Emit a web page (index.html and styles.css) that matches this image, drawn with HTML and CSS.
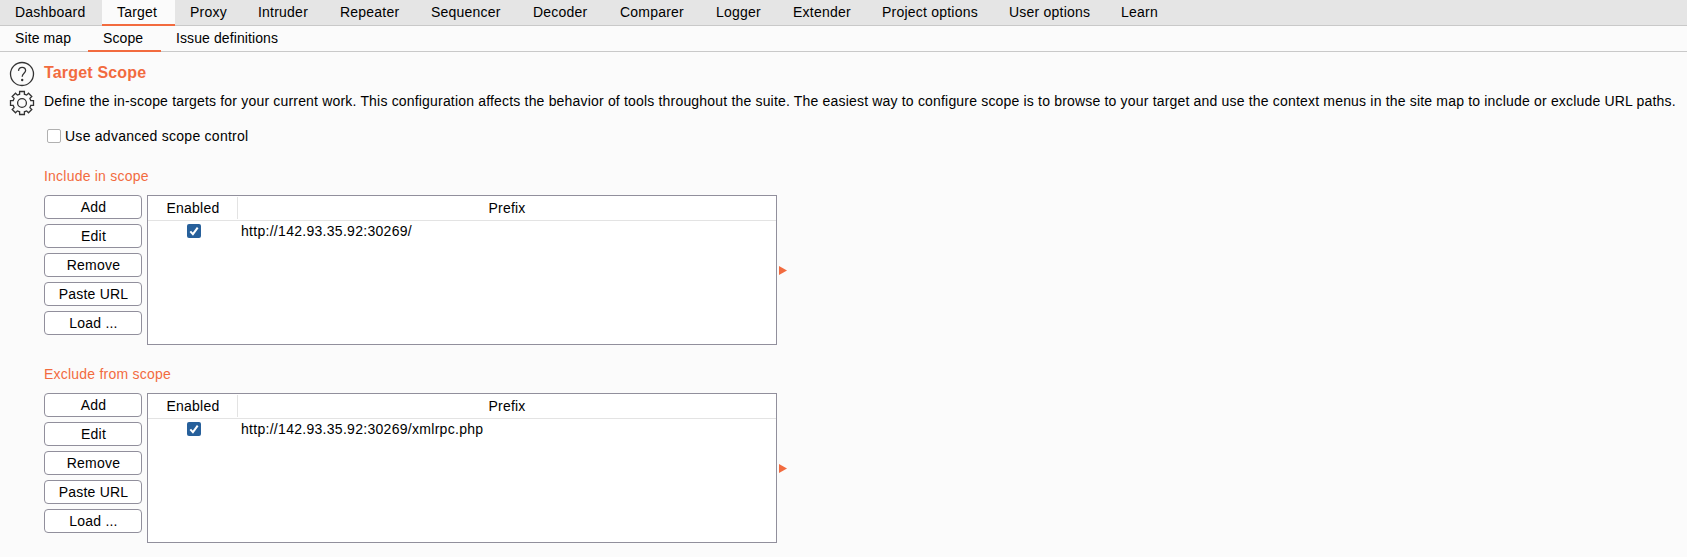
FILE: index.html
```html
<!DOCTYPE html>
<html lang="en">
<head>
<meta charset="utf-8">
<title>Target Scope</title>
<link rel="stylesheet" href="styles.css">
</head>
<body>
<nav class="tabs main-tabs">
  <span class="tab">Dashboard</span><span class="tab active">Target</span><span class="tab">Proxy</span><span class="tab">Intruder</span><span class="tab">Repeater</span><span class="tab">Sequencer</span><span class="tab">Decoder</span><span class="tab">Comparer</span><span class="tab">Logger</span><span class="tab">Extender</span><span class="tab">Project options</span><span class="tab">User options</span><span class="tab">Learn</span>
</nav>
<nav class="tabs sub-tabs">
  <span class="tab">Site map</span><span class="tab active">Scope</span><span class="tab">Issue definitions</span>
</nav>
<main class="page">
  <aside class="tools">
    <svg class="icon" viewBox="0 0 26 26"><circle cx="13" cy="13" r="11.5"/><path d="M9.5 9.8C9.8 7.3 11.2 6.4 13.1 6.4C15.2 6.4 16.6 7.7 16.6 9.6C16.6 12.3 13.2 12.4 13.2 15.7"/><circle class="dot" cx="13.2" cy="19" r="1.2"/></svg>
    <svg class="icon" viewBox="0 0 26 26"><path d="M10.6 4.2V1.5H15.4V4.2L17.6 5.1L19.5 3.2L22.8 6.5L20.9 8.4L21.8 10.6H24.5V15.4H21.8L20.9 17.6L22.8 19.5L19.5 22.8L17.6 20.9L15.4 21.8V24.5H10.6V21.8L8.4 20.9L6.5 22.8L3.2 19.5L5.1 17.6L4.2 15.4H1.5V10.6H4.2L5.1 8.4L3.2 6.5L6.5 3.2L8.4 5.1Z"/><circle cx="13" cy="13" r="4.4"/></svg>
  </aside>
  <div class="content">
    <h1 class="title">Target Scope</h1>
    <p class="description">Define the in-scope targets for your current work. This configuration affects the behavior of tools throughout the suite. The easiest way to configure scope is to browse to your target and use the context menus in the site map to include or exclude URL paths.</p>
    <label class="advanced"><span class="check"></span>Use advanced scope control</label>
    <section class="scope">
      <h2 class="heading">Include in scope</h2>
      <div class="editor">
        <div class="buttons"><button class="button">Add</button><button class="button">Edit</button><button class="button">Remove</button><button class="button">Paste URL</button><button class="button">Load ...</button></div>
        <div class="table">
          <div class="head"><span class="cell enabled">Enabled</span><span class="cell prefix">Prefix</span></div>
          <div class="row"><span class="mark"><svg class="checked" viewBox="0 0 14 14"><path d="M3.3 7.4L5.9 10.2L10.7 3.6"/></svg></span><span class="url">http://142.93.35.92:30269/</span></div>
        </div>
        <svg class="arrow" viewBox="0 0 8 9"><path d="M0 0L8 4.5L0 9Z"/></svg>
      </div>
    </section>
    <section class="scope">
      <h2 class="heading">Exclude from scope</h2>
      <div class="editor">
        <div class="buttons"><button class="button">Add</button><button class="button">Edit</button><button class="button">Remove</button><button class="button">Paste URL</button><button class="button">Load ...</button></div>
        <div class="table">
          <div class="head"><span class="cell enabled">Enabled</span><span class="cell prefix">Prefix</span></div>
          <div class="row"><span class="mark"><svg class="checked" viewBox="0 0 14 14"><path d="M3.3 7.4L5.9 10.2L10.7 3.6"/></svg></span><span class="url">http://142.93.35.92:30269/xmlrpc.php</span></div>
        </div>
        <svg class="arrow" viewBox="0 0 8 9"><path d="M0 0L8 4.5L0 9Z"/></svg>
      </div>
    </section>
  </div>
</main>
</body>
</html>
```
FILE: styles.css
```css
* { box-sizing: border-box; }
body {
  margin: 0;
  background: #fbfbfb;
  color: #000;
  font: 14px/16px "Liberation Sans", Arial, sans-serif;
  letter-spacing: 0.22px;
  overflow: hidden;
}
.tabs { display: grid; height: 26px; border-bottom: 1px solid #c9c9c9; }
.main-tabs {
  grid-template-columns: 102px 73px 68px 82px 91px 102px 87px 96px 77px 89px 127px 112px 70px;
  background: #e5e5e5;
}
.sub-tabs { grid-template-columns: 88px 73px 140px; letter-spacing: 0.1px; }
.tab { height: 26px; padding: 4px 0 0 15px; white-space: nowrap; }
.tab.active { background: #fbfbfb; border-bottom: 2px solid #f26b3f; }
.page { display: flex; padding: 9px 0 0 9px; }
.tools { display: flex; flex-direction: column; gap: 3px; width: 35px; }
.icon { width: 26px; height: 26px; fill: none; stroke: #333; stroke-width: 1.3; }
.icon .dot { fill: #333; stroke: none; }
.title { margin: 3px 0 0; font-size: 16px; line-height: 18px; font-weight: bold; letter-spacing: 0.18px; color: #f26b3f; }
.description { margin: 11px 0 0; white-space: nowrap; letter-spacing: 0.182px; }
.advanced { display: flex; align-items: center; gap: 4px; margin: 19px 0 0 3px; height: 16px; letter-spacing: 0.26px; }
.check { width: 14px; height: 14px; border: 1px solid #b0b0b0; border-radius: 2px; background: #fff; }
.scope { margin-top: 24px; }
.scope + .scope { margin-top: 21px; }
.heading { margin: 0 0 11px; font-size: 14px; line-height: 16px; font-weight: normal; color: #f26b3f; }
.editor { display: flex; }
.buttons { display: flex; flex-direction: column; gap: 5px; width: 98px; margin-right: 5px; }
.button {
  height: 24px;
  padding: 0 0 0 1px;
  border: 1px solid #918f9c;
  border-radius: 4px;
  background: #fff;
  color: #000;
  font: inherit;
  letter-spacing: inherit;
}
.table { width: 630px; height: 150px; border: 1px solid #918f9c; background: #fff; }
.head { display: flex; height: 25px; padding-top: 1px; border-bottom: 1px solid #e3e3e3; }
.cell { height: 22px; padding-top: 3px; text-align: center; }
.enabled { width: 90px; padding-left: 1px; border-right: 1px solid #e3e3e3; }
.prefix { flex: 1; }
.row { display: flex; height: 21px; }
.mark { width: 93px; padding: 3px 0 0 39px; }
.checked { display: block; width: 14px; height: 14px; border-radius: 2px; background: #27609b; fill: none; stroke: #fff; stroke-width: 2; }
.url { padding-top: 2px; letter-spacing: 0.29px; }
.arrow { width: 8px; height: 9px; margin: 71px 0 0 2px; fill: #f26b3f; }
```
